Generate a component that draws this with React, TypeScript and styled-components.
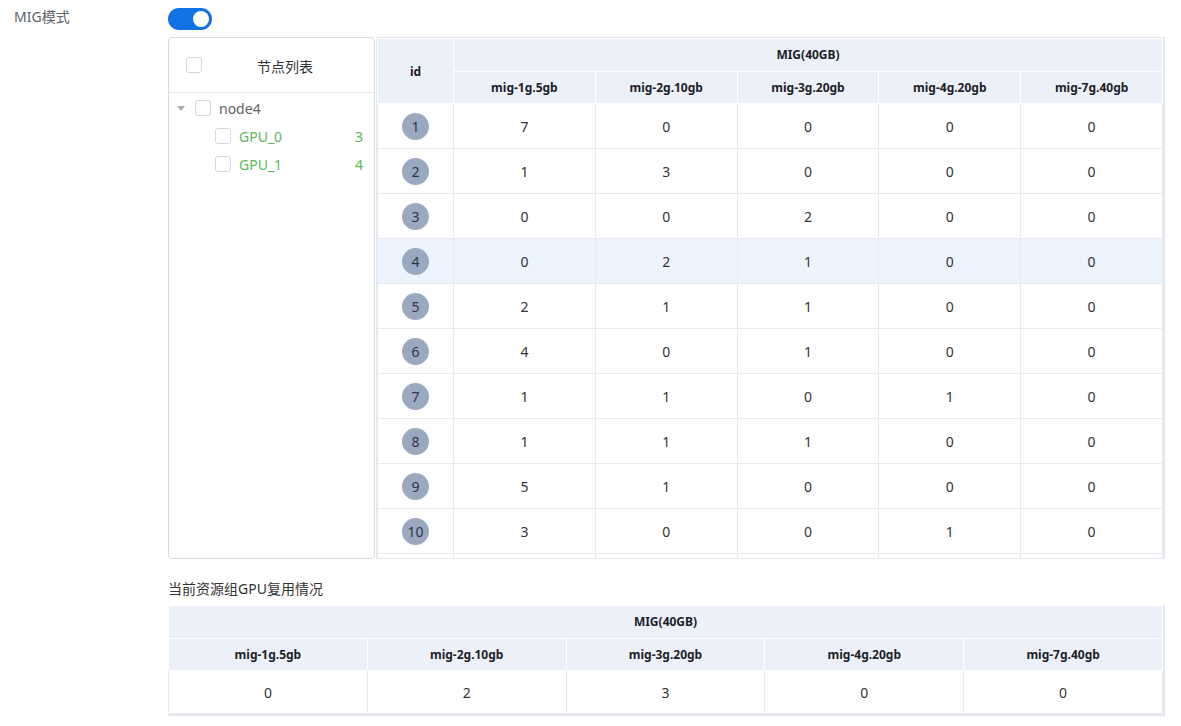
import React from "react";
import styled, { createGlobalStyle } from "styled-components";

const Global = createGlobalStyle`
  html, body { margin: 0; padding: 0; background: #fff; }
  body { font-family: "Noto Sans", "Noto Sans CJK SC", sans-serif; color: #333; }
  * { box-sizing: border-box; }
`;

const Page = styled.div`
  width: 1181px;
  padding-right: 16px;
`;

const FormItem = styled.div`
  display: flex;
`;

const Label = styled.div`
  width: 168px;
  padding-left: 14px;
  padding-top: 7px;
  font-size: 14px;
  line-height: 20px;
  color: #606266;
`;

const Content = styled.div`
  flex: 1;
  padding-top: 8px;
`;

const Toggle = styled.div`
  width: 44px;
  height: 22px;
  border-radius: 11px;
  background: #1171e6;
  position: relative;
  &::after {
    content: "";
    position: absolute;
    right: 3px;
    top: 3px;
    width: 16px;
    height: 16px;
    border-radius: 50%;
    background: #fff;
  }
`;

const SplitRow = styled.div`
  display: flex;
  margin-top: 7px;
  height: 522px;
`;

const TreePanel = styled.div`
  width: 207px;
  border: 1px solid #d9dbe3;
  border-radius: 4px;
  display: flex;
  flex-direction: column;
`;

const TreeHeader = styled.div`
  height: 55px;
  border-bottom: 1px solid #e4e7ed;
  display: flex;
  align-items: center;
  padding-left: 17px;
`;

const Check = styled.span`
  width: 16px;
  height: 16px;
  border: 1px solid #d4d7de;
  border-radius: 3px;
  background: #fff;
  flex-shrink: 0;
  display: inline-block;
`;

const TreeTitle = styled.div`
  flex: 1;
  text-align: center;
  font-size: 14px;
  color: #303133;
  padding-top: 1px;
  padding-right: 6px;
`;

const TreeBody = styled.div`
  padding-top: 1px;
`;

const TreeRow = styled.div<{ $indent: number }>`
  height: 28px;
  display: flex;
  align-items: center;
  padding-left: ${(p) => p.$indent}px;
  padding-right: 11px;
  font-size: 14px;
`;

const Caret = styled.span`
  width: 0;
  height: 0;
  border-left: 4px solid transparent;
  border-right: 4px solid transparent;
  border-top: 5px solid #a8abb2;
  margin-right: 10px;
`;

const NodeText = styled.span<{ $green?: boolean }>`
  margin-left: 8px;
  flex: 1;
  color: ${(p) => (p.$green ? "#5cb85c" : "#606266")};
`;

const Count = styled.span`
  color: #5cb85c;
`;

const TableBox = styled.div`
  flex: 1;
  margin-left: 1px;
  border: 1px solid #e4e7ed;
  border-right-width: 2px;
  overflow: hidden;
`;

const Table = styled.table`
  width: 100%;
  border-collapse: collapse;
  table-layout: fixed;
`;

const Th = styled.th`
  background: #ecf1f9;
  border: 1px solid #fff;
  height: 32.5px;
  font-size: 12px;
  font-weight: 700;
  color: #1d2129;
  text-align: center;
  padding: 0;
`;

const Tr = styled.tr<{ $hl?: boolean }>`
  background: ${(p) => (p.$hl ? "#ecf5ff" : "#fff")};
`;

const Td = styled.td<{ $h: number }>`
  height: ${(p) => p.$h}px;
  border: 1px solid #e8eaf0;
  text-align: center;
  font-size: 14px;
  color: #333;
  padding: 0;
`;

const Badge = styled.span`
  display: inline-flex;
  align-items: center;
  justify-content: center;
  width: 27px;
  height: 27px;
  border-radius: 50%;
  background: #9aa9c0;
  color: #2c3546;
  font-size: 14px;
`;

const SubTitle = styled.div`
  margin-top: 20px;
  font-size: 14px;
  line-height: 20px;
  color: #333;
`;

const BottomBox = styled.div`
  margin-top: 6px;
  border-bottom: 2px solid #e4e7ed;
  border-right: 2px solid #e4e7ed;
`;

const cols = ["mig-1g.5gb", "mig-2g.10gb", "mig-3g.20gb", "mig-4g.20gb", "mig-7g.40gb"];

const rows = [
  [7, 0, 0, 0, 0],
  [1, 3, 0, 0, 0],
  [0, 0, 2, 0, 0],
  [0, 2, 1, 0, 0],
  [2, 1, 1, 0, 0],
  [4, 0, 1, 0, 0],
  [1, 1, 0, 1, 0],
  [1, 1, 1, 0, 0],
  [5, 1, 0, 0, 0],
  [3, 0, 0, 1, 0],
];

export default function App() {
  return (
    <Page>
      <Global />
      <FormItem>
        <Label>MIG模式</Label>
        <Content>
          <Toggle />
          <SplitRow>
            <TreePanel>
              <TreeHeader>
                <Check />
                <TreeTitle>节点列表</TreeTitle>
              </TreeHeader>
              <TreeBody>
                <TreeRow $indent={8}>
                  <Caret />
                  <Check />
                  <NodeText>node4</NodeText>
                </TreeRow>
                <TreeRow $indent={46}>
                  <Check />
                  <NodeText $green>GPU_0</NodeText>
                  <Count>3</Count>
                </TreeRow>
                <TreeRow $indent={46}>
                  <Check />
                  <NodeText $green>GPU_1</NodeText>
                  <Count>4</Count>
                </TreeRow>
              </TreeBody>
            </TreePanel>
            <TableBox>
              <Table>
                <colgroup>
                  <col style={{ width: 76 }} />
                  {cols.map((c) => (
                    <col key={c} />
                  ))}
                </colgroup>
                <thead>
                  <tr>
                    <Th rowSpan={2}>id</Th>
                    <Th colSpan={5}>MIG(40GB)</Th>
                  </tr>
                  <tr>
                    {cols.map((c) => (
                      <Th key={c}>{c}</Th>
                    ))}
                  </tr>
                </thead>
                <tbody>
                  {rows.map((r, i) => (
                    <Tr key={i} $hl={i === 3}>
                      <Td $h={45}>
                        <Badge>{i + 1}</Badge>
                      </Td>
                      {r.map((v, j) => (
                        <Td $h={45} key={j}>
                          {v}
                        </Td>
                      ))}
                    </Tr>
                  ))}
                  <Tr>
                    {[0, 1, 2, 3, 4, 5].map((j) => (
                      <Td $h={45} key={j} />
                    ))}
                  </Tr>
                </tbody>
              </Table>
            </TableBox>
          </SplitRow>
          <SubTitle>当前资源组GPU复用情况</SubTitle>
          <BottomBox>
            <Table>
              <thead>
                <tr>
                  <Th colSpan={5}>MIG(40GB)</Th>
                </tr>
                <tr>
                  {cols.map((c) => (
                    <Th key={c}>{c}</Th>
                  ))}
                </tr>
              </thead>
              <tbody>
                <Tr>
                  {[0, 2, 3, 0, 0].map((v, j) => (
                    <Td $h={43} key={j}>
                      {v}
                    </Td>
                  ))}
                </Tr>
              </tbody>
            </Table>
          </BottomBox>
        </Content>
      </FormItem>
    </Page>
  );
}
